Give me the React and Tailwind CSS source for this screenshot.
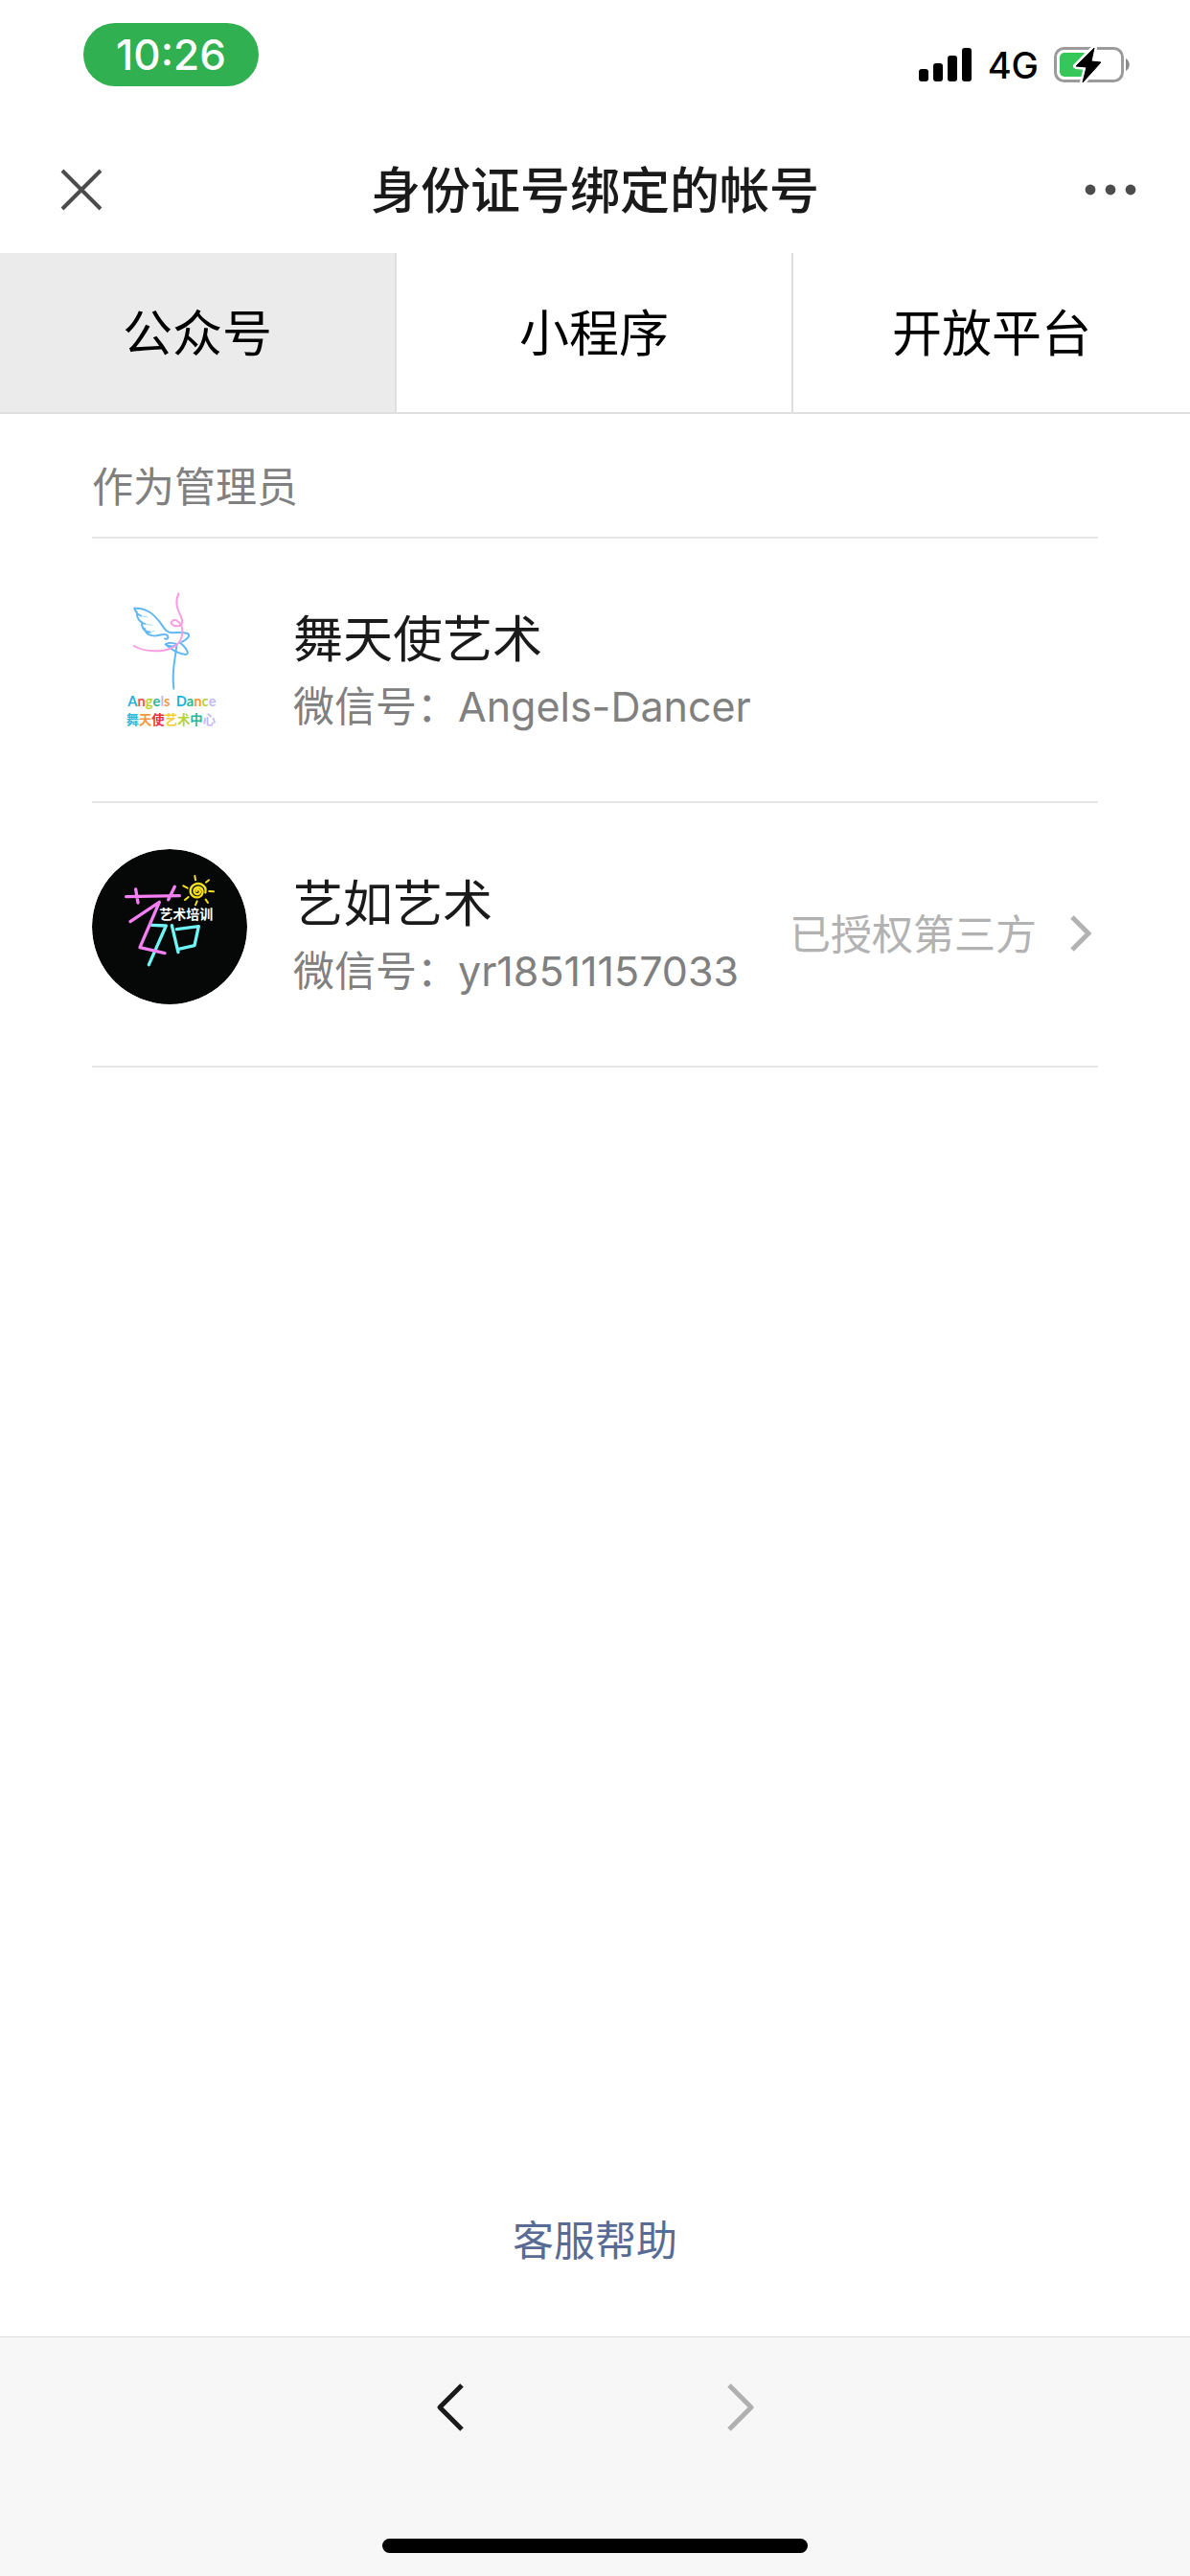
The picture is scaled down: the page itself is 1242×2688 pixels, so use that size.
import { useState } from "react";

const tabs = ["公众号", "小程序", "开放平台"];

const accounts = [
  { name: "舞天使艺术", wechatId: "Angels-Dancer", Logo: AngelsLogo },
  {
    name: "艺如艺术",
    wechatId: "yr18511157033",
    Logo: YiruLogo,
    status: "已授权第三方",
  },
];

function AngelsLogo() {
  return (
    <svg viewBox="18 27 486 486" className="size-[162px] shrink-0 rounded-full" fill="none" strokeLinecap="round" strokeLinejoin="round">
      <g stroke="#62b8f5" strokeWidth="6">
        <path d="M151 101 C190 99 212 121 231 145 C243 161 248 176 266 178 C286 176 304 176 317 180 C328 186 317 198 300 206" />
        <path d="M151 101 C155 115 161 121 172 125 M158 112 C158 132 166 146 184 150 M174 145 C173 165 184 176 201 176 M183 165 C188 186 203 188 221 187 C236 184 243 180 251 184 C261 191 255 200 246 196" />
        <path d="M248 214 C257 208 274 208 285 215 C275 222 259 222 248 214 C270 234 292 244 311 246 C326 245 312 226 302 216 C297 211 293 209 292 207" />
        <path d="M283 215 C281 255 266 290 274 353" />
      </g>
      <path d="M172 125 L192 129 M184 150 L205 154 M201 176 L214 172" stroke="#a5d9f8" strokeWidth="3" />
      <path d="M289 55 C276 85 287 106 296 126 C305 146 300 156 288 157 C270 157 261 147 269 141 C280 133 299 145 301 169 C302 203 287 225 242 233 C205 238 170 231 149 219" stroke="#f99de0" strokeWidth="6" />
      <text y="409" className="font-['Lato'] text-[44px] font-bold">
        <tspan x="130" fill="#1fb4dd">A</tspan>
        <tspan fill="#f0524f">n</tspan>
        <tspan fill="#b7d433">g</tspan>
        <tspan fill="#2bb59a">e</tspan>
        <tspan fill="#c3b9f5">l</tspan>
        <tspan fill="#f5993b">s</tspan>
        <tspan x="281" fill="#1fb4dd">D</tspan>
        <tspan fill="#2bb59a">a</tspan>
        <tspan fill="#f5993b">n</tspan>
        <tspan fill="#b7d433">c</tspan>
        <tspan fill="#c3b9f5">e</tspan>
      </text>
      <text x="125" y="464" className="font-['Noto_Sans_CJK_SC'] text-[40px] font-bold">
        <tspan fill="#35b9dd">舞</tspan>
        <tspan fill="#f5993b">天</tspan>
        <tspan fill="#ea2f3c">使</tspan>
        <tspan fill="#f2cf2e">艺</tspan>
        <tspan fill="#b7d433">术</tspan>
        <tspan fill="#2bb59a">中</tspan>
        <tspan fill="#c3b9f5">心</tspan>
      </text>
    </svg>
  );
}

function YiruLogo() {
  return (
    <svg viewBox="18 45 486 486" className="size-[162px] shrink-0 rounded-full" fill="none" strokeLinecap="round" strokeLinejoin="round">
      <circle cx="261" cy="288" r="243" fill="#050807" />
      <g stroke="#6ff5f5" strokeWidth="10">
        <path d="M205 283 L250 285 L196 407" />
        <path d="M268 284 L288 368 M283 296 L352 287 L339 347 L289 358" />
      </g>
      <g stroke="#f57ff5" strokeWidth="10">
        <path d="M125 194 L292 191 M155 171 L162 213 M277 163 L257 203" />
        <path d="M138 272 L229 211 L168 353 L246 371" />
      </g>
      <g stroke="#f7e11c">
        <path strokeWidth="6" d="M340 129 L342 142 M384 142 L375 149 M304 160 L317 167 M385 177 L399 178 M309 204 L320 195 M347 208 L342 220 M374 203 L381 213" />
        <path strokeWidth="7" d="M346 177 C344 171 353 169 356 175 C359 184 349 190 341 184 C333 175 340 164 352 164 C368 167 369 188 354 195 C339 200 325 189 326 174 C328 157 346 149 360 155 C372 161 376 170 373 181" />
      </g>
      <text x="229" y="265" fill="#fff" className="font-['Noto_Sans_CJK_SC'] text-[42px] font-bold">
        艺术培训
      </text>
    </svg>
  );
}

function StatusBar() {
  return (
    <div className="flex h-[132px] shrink-0 items-start justify-between pt-6 pr-[62px] pl-[87px]">
      <div className="flex h-[66px] w-[183px] items-center justify-center rounded-full bg-[#30b050] text-[44px] font-medium text-white">
        10:26
      </div>
      <div className="mt-[22px] flex h-11 items-center">
        <svg viewBox="0 0 56 36" className="h-9 w-14" fill="#000">
          <rect x="0" y="22" width="10" height="13" rx="3" />
          <rect x="15" y="16" width="10" height="19" rx="3" />
          <rect x="30" y="8" width="10" height="27" rx="3" />
          <rect x="45" y="0" width="10" height="35" rx="3" />
        </svg>
        <span className="ml-4 text-[38px] font-medium">4G</span>
        <svg viewBox="0 0 80 40" className="ml-4 h-10 w-20">
          <rect x="1.5" y="2.5" width="70" height="34" rx="9" fill="none" stroke="#9b9b9b" strokeWidth="3" />
          <path d="M75 13 C80 16 80 23 75 26 Z" fill="#8a8a8a" />
          <rect x="6" y="7" width="29" height="25" rx="5" fill="#35c759" />
          <path d="M42 2 L23 21 L34 22 L30 38 L49 17 L39 16 Z" fill="#000" stroke="#fff" strokeWidth="6" strokeLinejoin="round" />
          <path d="M42 2 L23 21 L34 22 L30 38 L49 17 L39 16 Z" fill="#000" stroke="#000" strokeWidth="1" strokeLinejoin="round" />
        </svg>
      </div>
    </div>
  );
}

function NavBar() {
  return (
    <header className="grid h-[132px] shrink-0 grid-cols-[1fr_auto_1fr] items-center px-14">
      <button aria-label="关闭" className="w-14">
        <svg viewBox="0 0 56 56" className="size-14" stroke="#4c4c4c" strokeWidth="4">
          <path d="M9 8 L49 48 M49 8 L9 48" />
        </svg>
      </button>
      <h1 className="pt-1 text-[52px] font-medium text-[#1a1a1a]">身份证号绑定的帐号</h1>
      <button aria-label="更多" className="justify-self-end">
        <svg viewBox="0 0 54 12" className="h-3 w-[54px]" fill="#4c4c4c">
          <circle cx="6" cy="6" r="5.4" />
          <circle cx="27" cy="6" r="5.4" />
          <circle cx="48" cy="6" r="5.4" />
        </svg>
      </button>
    </header>
  );
}

function AccountRow({ name, wechatId, status, Logo }) {
  return (
    <li className="flex items-center border-b-2 border-[#e6e6e6] pt-12 pb-16">
      <Logo />
      <div className="mt-5 ml-12 flex-1">
        <p className="text-[52px] leading-[72px] text-[#1a1a1a]">{name}</p>
        <p className="text-[43px] leading-[66px] text-[#808080]">微信号：{wechatId}</p>
      </div>
      {status && (
        <a href="#authorized" className="mt-4 flex items-center gap-8 text-[43px] text-[#b2b2b2]">
          {status}
          <svg viewBox="0 0 32 44" className="h-11 w-8" fill="none" stroke="#b2b2b2" strokeWidth="5">
            <path d="M5 4 L22 21 L5 38" />
          </svg>
        </a>
      )}
    </li>
  );
}

export default function App() {
  const [active, setActive] = useState(0);

  return (
    <div className="flex min-h-screen flex-col bg-white font-['Inter','Noto_Sans_CJK_SC',sans-serif] text-black">
      <StatusBar />
      <NavBar />
      <nav className="grid h-[168px] shrink-0 grid-cols-3 border-b-2 border-[#dfdfdf]">
        {tabs.map((tab, i) => (
          <button
            key={tab}
            onClick={() => setActive(i)}
            className={`border-[#dfdfdf] pt-1 text-[52px] not-last:border-r-2 ${active === i ? "bg-[#ebebeb]" : ""}`}
          >
            {tab}
          </button>
        ))}
      </nav>

      <main className="flex flex-1 flex-col px-24">
        <h2 className="border-b-2 border-[#e6e6e6] pt-11 pb-5 text-[43px] leading-[64px] text-[#808080]">
          作为管理员
        </h2>
        <ul>
          {accounts.map((account) => (
            <AccountRow key={account.wechatId} {...account} />
          ))}
        </ul>
        <a href="#help" className="mt-auto mb-[68px] self-center text-[43px] leading-[64px] text-[#576b95]">
          客服帮助
        </a>
      </main>

      <footer className="flex h-[250px] shrink-0 flex-col items-center justify-between border-t border-[#e0e0e0] bg-[#f7f7f7] pt-[46px] pb-6">
        <div className="flex gap-[246px]">
          <button aria-label="后退">
            <svg viewBox="0 0 56 56" className="size-14" fill="none" stroke="#1a1a1a" strokeWidth="5" strokeLinejoin="round">
              <path d="M40 4 L17 27 L40 50" />
            </svg>
          </button>
          <button aria-label="前进" disabled>
            <svg viewBox="0 0 56 56" className="size-14" fill="none" stroke="#b0b0b0" strokeWidth="5" strokeLinejoin="round">
              <path d="M17 4 L40 27 L17 50" />
            </svg>
          </button>
        </div>
        <div className="h-[15px] w-[444px] rounded-full bg-black" />
      </footer>
    </div>
  );
}
